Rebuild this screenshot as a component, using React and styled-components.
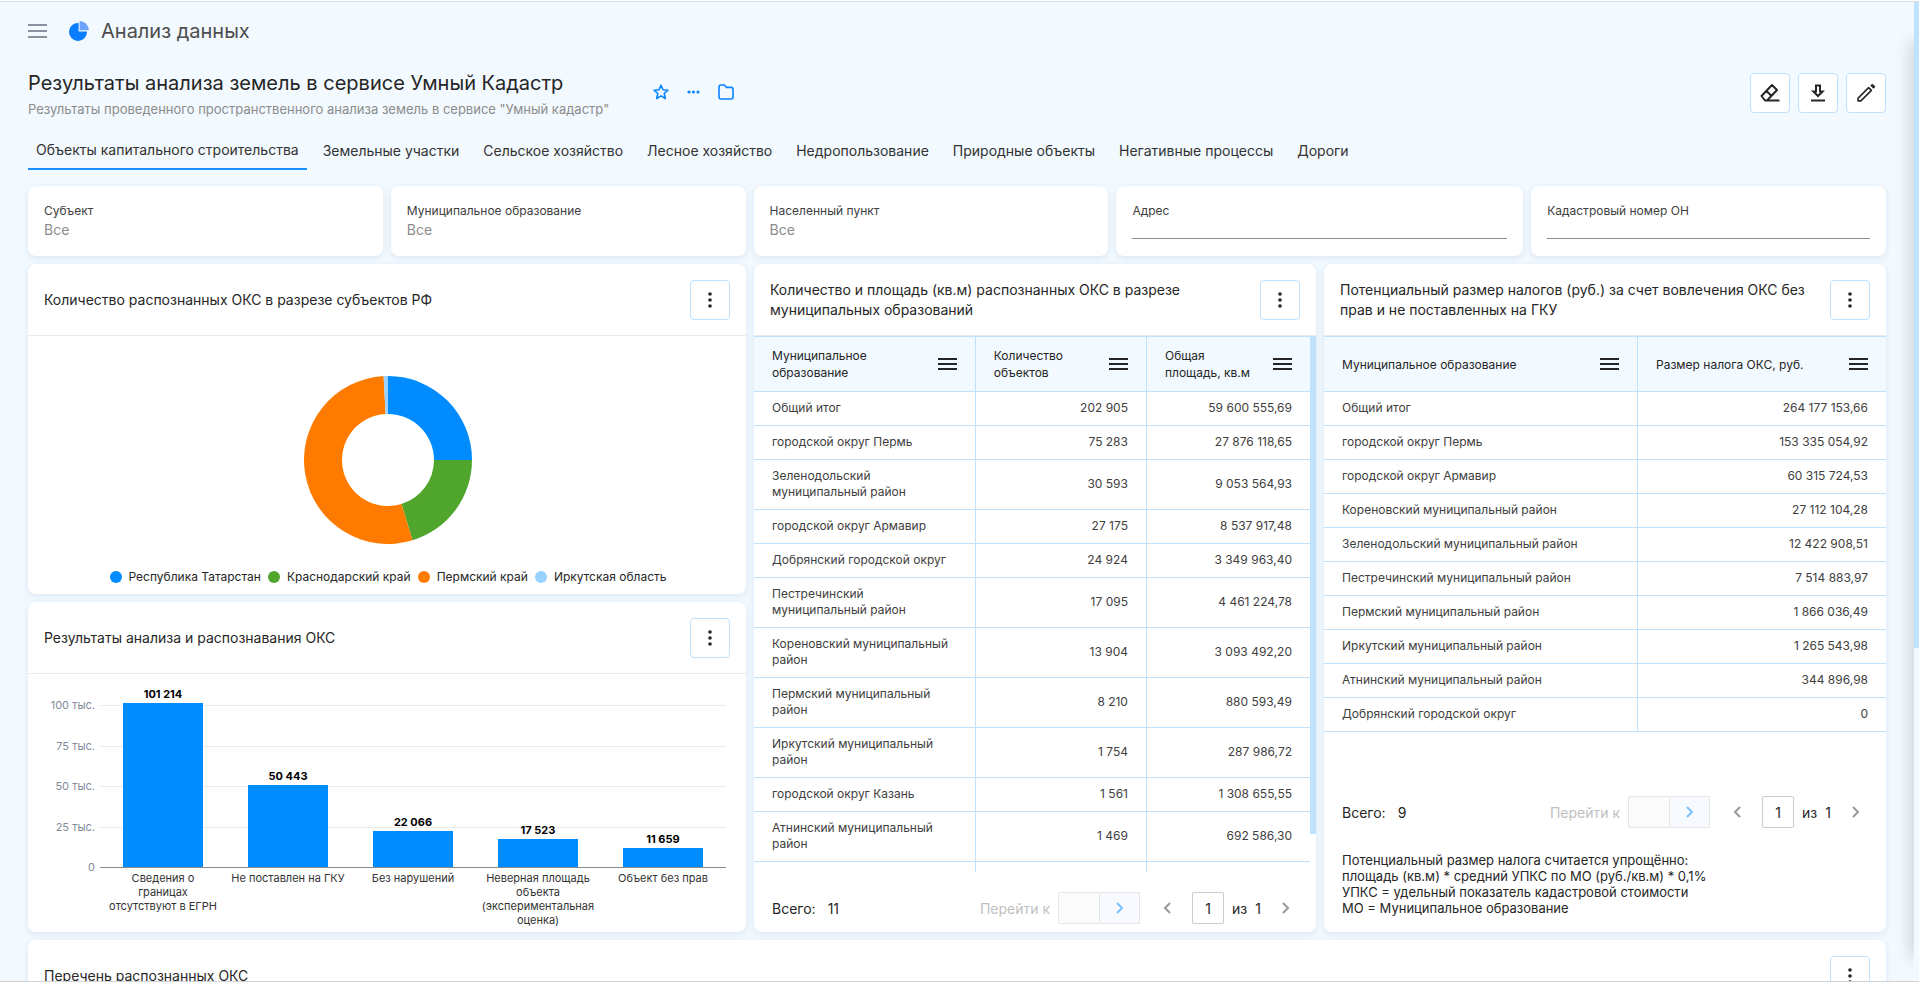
import styled, { createGlobalStyle, css } from "styled-components";

const GlobalStyle = createGlobalStyle`
  * {
    box-sizing: border-box;
  }
  body {
    margin: 0;
    background: #f2f9ff;
    color: #262626;
    font-family: Inter, "Noto Sans", sans-serif;
    font-size: 14px;
  }
  button,
  input {
    font-family: inherit;
    color: inherit;
  }
  svg {
    display: block;
  }
`;

const Screen = styled.div`
  height: 100vh;
  overflow: hidden;
  display: flex;
  border-top: 1px solid #fff;
  border-bottom: 1px solid #cfd3d6;
`;

const Page = styled.div`
  flex: 1;
  min-width: 0;
  padding: 0 28px;
  border-top: 1px solid #d9dde0;
`;

const ScrollTrack = styled.div`
  flex: none;
  width: 5px;
  position: relative;
  z-index: 2;
  background: #f2f9ff;
  border-top: 1px solid #d9dde0;
`;

const ScrollThumb = styled.div`
  height: 66%;
  background: #bfe2ff;
`;

const DrawerEdge = styled.aside`
  position: fixed;
  z-index: 1;
  top: 40px;
  bottom: 24px;
  left: calc(100% - 5px);
  width: 5px;
  box-shadow: 0 0 16px rgba(0, 0, 0, 0.4);
`;

const TopBar = styled.header`
  height: 58px;
  display: flex;
  align-items: center;
  gap: 12px;
`;

const PlainButton = styled.button`
  display: flex;
  align-items: center;
  justify-content: center;
  padding: 0;
  border: 0;
  background: none;
  cursor: pointer;
  color: ${(p) => p.$color || "inherit"};
`;

const Brand = styled.div`
  display: flex;
  align-items: center;
  gap: 12px;
  margin-left: 10px;
  font-size: 20px;
  line-height: 24px;
  color: #4d4d4d;
`;

const TitleRow = styled.div`
  display: flex;
  justify-content: space-between;
  height: 76px;
`;

const TitleBlock = styled.div`
  display: flex;
  gap: 44px;
  padding-top: 9px;
`;

const Title = styled.h1`
  margin: 0;
  font-size: 20px;
  font-weight: 400;
  line-height: 28px;
`;

const Subtitle = styled.p`
  margin: 3px 0 0;
  font-size: 13px;
  line-height: 18px;
  color: #8c8c8c;
`;

const TitleIcons = styled.div`
  display: flex;
  align-items: center;
  gap: 18px;
  height: 46px;
`;

const Actions = styled.div`
  display: flex;
  gap: 8px;
  padding-top: 13px;
`;

const SquareButton = styled.button`
  flex: none;
  width: 40px;
  height: 40px;
  display: flex;
  align-items: center;
  justify-content: center;
  padding: 0;
  background: #fff;
  border: 1px solid #bfe2ff;
  border-radius: 4px;
  cursor: pointer;
`;

const Tabs = styled.nav`
  display: flex;
  gap: 8px;
  height: 34px;
`;

const Tab = styled.a`
  padding: 5px 8px 0;
  font-size: 14px;
  line-height: 20px;
  color: #333;
  text-decoration: none;
  ${(p) =>
    p.$active &&
    css`
      padding-top: 4px;
      border-bottom: 2px solid #1890ff;
    `}
`;

const panel = css`
  background: #fff;
  border-radius: 8px;
  box-shadow: 0 2px 6px rgba(30, 80, 130, 0.1);
`;

const Filters = styled.div`
  display: grid;
  grid-template-columns: 355fr 355fr 355fr 407fr 355fr;
  gap: 8px;
  margin-top: 16px;
`;

const Filter = styled.div`
  ${panel}
  height: 70px;
  padding: 17px 16px 0;
  display: flex;
  flex-direction: column;
  font-size: 12px;
  line-height: 16px;
  color: #404040;
`;

const FilterValue = styled.button`
  padding: 0;
  border: 0;
  background: none;
  text-align: left;
  font-size: 14px;
  line-height: 22px;
  color: #8c8c8c;
`;

const FilterInput = styled.input`
  width: 100%;
  height: 20px;
  border: 0;
  border-bottom: 1px solid #8c8c8c;
  background: none;
  outline: none;
`;

const Board = styled.main`
  display: grid;
  grid-template-columns: 718fr 562fr 562fr;
  gap: 8px;
  margin-top: 8px;
`;

const Column = styled.div`
  display: flex;
  flex-direction: column;
  gap: 8px;
  min-width: 0;
`;

const Card = styled.section`
  ${panel}
  height: ${(p) => (p.$tall ? "668px" : "330px")};
  grid-column: ${(p) => (p.$wide ? "1 / -1" : "auto")};
  display: flex;
  flex-direction: column;
  overflow: hidden;
`;

const CardHead = styled.div`
  flex: none;
  height: 72px;
  display: flex;
  align-items: center;
  justify-content: space-between;
  gap: 16px;
  padding: 0 16px;
  border-bottom: 1px solid #ebebeb;
`;

const CardTitle = styled.h2`
  margin: 0;
  font-size: 14px;
  font-weight: 400;
  line-height: 20px;
`;

const ChartBody = styled.div`
  flex: 1;
  display: flex;
  flex-direction: column;
  align-items: center;
  padding: ${(p) => (p.$donut ? "40px 0 0 2px" : "0")};
`;

const Legend = styled.div`
  display: flex;
  gap: 7px;
  margin-top: 24px;
  font-size: 12px;
  line-height: 18px;
`;

const LegendItem = styled.span`
  display: flex;
  align-items: center;
  gap: 7px;
  &::before {
    content: "";
    width: 12px;
    height: 12px;
    border-radius: 50%;
    background: ${(p) => p.$color};
  }
`;

const TableArea = styled.div`
  flex: 1;
  min-height: 0;
  overflow: hidden;
  display: flex;
  align-items: flex-start;
`;

const TableThumb = styled.div`
  flex: none;
  width: 6px;
  height: 93%;
  background: #bfe2ff;
`;

const Table = styled.table`
  width: 100%;
  table-layout: fixed;
  border-collapse: separate;
  border-spacing: 0;
  font-size: 12px;
  th,
  td {
    border-bottom: 1px solid #bfe2ff;
  }
  th + th,
  td + td {
    border-left: 1px solid #bfe2ff;
  }
`;

const Th = styled.th`
  width: ${(p) => p.$width};
  height: 56px;
  padding: 0 18px;
  border-top: 1px solid #bfe2ff;
  background: #f2f9ff;
  font-weight: 400;
  line-height: 17px;
  text-align: left;
`;

const ThInner = styled.div`
  display: flex;
  align-items: center;
  justify-content: space-between;
  gap: 16px;
`;

const Td = styled.td`
  padding: 8px 18px 9px;
  line-height: 16px;
  text-align: ${(p) => (p.$num ? "right" : "left")};
  color: #404040;
`;

const Pager = styled.div`
  flex: none;
  height: 60px;
  display: flex;
  align-items: center;
  padding: 12px 22px 0 18px;
  font-size: 14px;
`;

const Total = styled.span`
  flex: 1;
  display: flex;
  gap: 12px;
`;

const JumpLabel = styled.label`
  display: flex;
  align-items: center;
  gap: 8px;
  color: #bfbfbf;
`;

const PageInput = styled.input`
  width: ${(p) => (p.$jump ? "42px" : "32px")};
  height: 32px;
  margin-left: ${(p) => (p.$jump ? "0" : "16px")};
  padding: 0;
  text-align: center;
  font-size: 14px;
  background: ${(p) => (p.$jump ? "#fcfcfc" : "#fff")};
  border: 1px solid ${(p) => (p.$jump ? "#e6e6e6" : "#ccc")};
  border-radius: 2px;
`;

const JumpButton = styled(PlainButton)`
  width: 40px;
  height: 32px;
  margin-right: 20px;
  background: #f7fbff;
  border: 1px solid #e6e6e6;
  border-left: 0;
  color: #7cc1ff;
`;

const Pages = styled.span`
  display: flex;
  gap: 8px;
  margin: 0 17px 0 8px;
`;

const Note = styled.p`
  flex: none;
  margin: 0;
  padding: 16px 18px;
  font-size: 13px;
  line-height: 16px;
  white-space: pre-line;
`;

function MenuIcon() {
  return (
    <svg width="19" height="14" viewBox="0 0 19 14">
      <path d="M0 1h19M0 7h19M0 13h19" stroke="#6b6f80" strokeWidth="1.6" />
    </svg>
  );
}

function PieIcon() {
  return (
    <svg width="20" height="20" viewBox="0 0 20 20">
      <path d="M9.6 2A9 9 0 1 0 18 10.4H9.6z" fill="#0a7cff" />
      <path d="M10.6 0a9.2 9.2 0 0 1 9.2 9.2h-9.2z" fill="#6ea2ff" />
    </svg>
  );
}

function StarIcon() {
  return (
    <svg width="16" height="16" viewBox="0 0 16 16" fill="none" stroke="#0a84ff" strokeWidth="1.6" strokeLinejoin="round">
      <path d="M8 1.2l2 4.5 4.9.5-3.7 3.3 1.1 5L8 11.900l-4.3 2.6 1.1-5L1.100 6.200 6 5.700z" />
    </svg>
  );
}

function EllipsisIcon() {
  return (
    <svg width="13" height="4" viewBox="0 0 13 4" fill="#0a84ff">
      <circle cx="2" cy="2" r="1.6" />
      <circle cx="6.5" cy="2" r="1.6" />
      <circle cx="11" cy="2" r="1.6" />
    </svg>
  );
}

function FolderIcon() {
  return (
    <svg width="16" height="16" viewBox="0 0 16 16" fill="none" stroke="#0a84ff" strokeWidth="1.6" strokeLinejoin="round">
      <path d="M1 3q0-2 2-2h3.4l2 2.400H13q2 0 2 2V13q0 2-2 2H3q-2 0-2-2z" />
    </svg>
  );
}

function EraserIcon() {
  return (
    <svg width="20" height="20" viewBox="0 0 20 20" fill="none" stroke="#262626" strokeWidth="2" strokeLinejoin="round">
      <path d="M12 2l5 5L7 17.500H5L1.500 13zM6.500 8l5 5M6 17.500h13.500" />
    </svg>
  );
}

function DownloadIcon() {
  return (
    <svg width="14" height="18" viewBox="0 0 14 18" fill="none" stroke="#262626" strokeWidth="2">
      <path d="M5 1.500h4v6h2.600L7 12 2.400 7.500H5zM0 16.500h14" />
    </svg>
  );
}

function PencilIcon() {
  return (
    <svg width="20" height="20" viewBox="0 0 20 20" fill="none" stroke="#262626" strokeWidth="1.6" strokeLinejoin="round">
      <path d="M12.600 4.600l2.800 2.800L4.900 17.900H2.100v-2.800z" />
      <path d="M14.600 2.600l1.200-1.200q.6-.5 1.200 0l1.600 1.600q.5.600 0 1.200l-1.200 1.200z" fill="#262626" strokeWidth="0.600" />
    </svg>
  );
}

function DotsIcon() {
  return (
    <svg width="4" height="16" viewBox="0 0 4 16" fill="#262626">
      <circle cx="2" cy="2" r="1.8" />
      <circle cx="2" cy="8" r="1.8" />
      <circle cx="2" cy="14" r="1.8" />
    </svg>
  );
}

function ColumnMenuIcon() {
  return (
    <svg width="19" height="12" viewBox="0 0 19 12" stroke="#262626" strokeWidth="2">
      <path d="M0 1h19M0 6h19M0 11h19" />
    </svg>
  );
}

function Chevron({ left }) {
  return (
    <svg width="16" height="16" viewBox="0 0 16 16" fill="none" stroke="currentColor" strokeWidth="2">
      <path d={left ? "M10 3L5 8l5 5" : "M5 3l5 5-5 5"} />
    </svg>
  );
}

function MoreButton() {
  return (
    <SquareButton aria-label="Меню">
      <DotsIcon />
    </SquareButton>
  );
}

const tabs = [
  "Объекты капитального строительства",
  "Земельные участки",
  "Сельское хозяйство",
  "Лесное хозяйство",
  "Недропользование",
  "Природные объекты",
  "Негативные процессы",
  "Дороги",
];

const regions = [
  { name: "Республика Татарстан", color: "#008cff", from: 0, to: 90 },
  { name: "Краснодарский край", color: "#50a62d", from: 90, to: 163 },
  { name: "Пермский край", color: "#ff7b00", from: 163, to: 357 },
  { name: "Иркутская область", color: "#99d1ff", from: 357, to: 360 },
];

const bars = [
  { value: 101214, label: ["Сведения о", "границах", "отсутствуют в ЕГРН"] },
  { value: 50443, label: ["Не поставлен на ГКУ"] },
  { value: 22066, label: ["Без нарушений"] },
  { value: 17523, label: ["Неверная площадь", "объекта", "(экспериментальная", "оценка)"] },
  { value: 11659, label: ["Объект без прав"] },
];

const areaRows = [
  ["Общий итог", "202 905", "59 600 555,69"],
  ["городской округ Пермь", "75 283", "27 876 118,65"],
  ["Зеленодольский муниципальный район", "30 593", "9 053 564,93"],
  ["городской округ Армавир", "27 175", "8 537 917,48"],
  ["Добрянский городской округ", "24 924", "3 349 963,40"],
  ["Пестречинский муниципальный район", "17 095", "4 461 224,78"],
  ["Кореновский муниципальный район", "13 904", "3 093 492,20"],
  ["Пермский муниципальный район", "8 210", "880 593,49"],
  ["Иркутский муниципальный район", "1 754", "287 986,72"],
  ["городской округ Казань", "1 561", "1 308 655,55"],
  ["Атнинский муниципальный район", "1 469", "692 586,30"],
  ["", "", ""],
];

const taxRows = [
  ["Общий итог", "264 177 153,66"],
  ["городской округ Пермь", "153 335 054,92"],
  ["городской округ Армавир", "60 315 724,53"],
  ["Кореновский муниципальный район", "27 112 104,28"],
  ["Зеленодольский муниципальный район", "12 422 908,51"],
  ["Пестречинский муниципальный район", "7 514 883,97"],
  ["Пермский муниципальный район", "1 866 036,49"],
  ["Иркутский муниципальный район", "1 265 543,98"],
  ["Атнинский муниципальный район", "344 896,98"],
  ["Добрянский городской округ", "0"],
];

const note = `Потенциальный размер налога считается упрощённо:
площадь (кв.м) * средний УПКС по МО (руб./кв.м) * 0,1%
УПКС = удельный показатель кадастровой стоимости
МО = Муниципальное образование`;

function arc(from, to) {
  const pt = (r, deg) => {
    const a = (deg * Math.PI) / 180;
    return `${84 + r * Math.sin(a)} ${84 - r * Math.cos(a)}`;
  };
  const big = to - from > 180 ? 1 : 0;
  return `M${pt(84, from)}A84 84 0 ${big} 1 ${pt(84, to)}L${pt(46, to)}A46 46 0 ${big} 0 ${pt(46, from)}Z`;
}

function Donut() {
  return (
    <svg width="168" height="168" viewBox="0 0 168 168">
      {regions.map((r) => (
        <path key={r.name} d={arc(r.from, r.to)} fill={r.color} />
      ))}
    </svg>
  );
}

function BarChart() {
  const base = 193;
  const y = (v) => Math.round(base - (v * 162) / 100000);
  return (
    <svg width="100%" viewBox="0 0 718 256" fontSize="11">
      {[25, 50, 75, 100].map((n) => (
        <g key={n}>
          <path d={`M72 ${y(n * 1000) + 0.5}H698`} stroke="#ebebeb" />
          <text x="67" y={y(n * 1000) + 4} textAnchor="end" fill="#7f8b99">
            {n} тыс.
          </text>
        </g>
      ))}
      <text x="67" y={base + 4} textAnchor="end" fill="#7f8b99">
        0
      </text>
      {bars.map((b, i) => {
        const cx = 135 + i * 125;
        const top = y(b.value);
        return (
          <g key={b.value} textAnchor="middle">
            <rect x={cx - 40} y={top} width="80" height={base - top} fill="#008cff" />
            <text x={cx} y={top - 5} fontWeight="700" fill="#000" stroke="#fff" strokeWidth="2" paintOrder="stroke">
              {b.value.toLocaleString("ru-RU")}
            </text>
            <text fill="#333">
              {b.label.map((line, n) => (
                <tspan key={line} x={cx} y={base + 15 + n * 14}>
                  {line}
                </tspan>
              ))}
            </text>
          </g>
        );
      })}
      <path d="M72 193.5H698" stroke="#8c8c8c" />
    </svg>
  );
}

function DataTable({ columns, rows }) {
  return (
    <Table>
      <thead>
        <tr>
          {columns.map((c) => (
            <Th key={c.title} $width={c.width}>
              <ThInner>
                {c.title}
                <PlainButton aria-label="Меню столбца">
                  <ColumnMenuIcon />
                </PlainButton>
              </ThInner>
            </Th>
          ))}
        </tr>
      </thead>
      <tbody>
        {rows.map((row) => (
          <tr key={row[0]}>
            {row.map((cell, i) => (
              <Td key={i} $num={i > 0}>
                {cell || "\u00a0"}
              </Td>
            ))}
          </tr>
        ))}
      </tbody>
    </Table>
  );
}

function Pagination({ total }) {
  return (
    <Pager>
      <Total>
        <span>Всего:</span>
        <span>{total}</span>
      </Total>
      <JumpLabel>
        Перейти к
        <PageInput $jump disabled />
      </JumpLabel>
      <JumpButton aria-label="Перейти">
        <Chevron />
      </JumpButton>
      <PlainButton $color="#999" aria-label="Назад">
        <Chevron left />
      </PlainButton>
      <PageInput aria-label="Страница" defaultValue="1" />
      <Pages>
        <span>из</span>
        <span>1</span>
      </Pages>
      <PlainButton $color="#999" aria-label="Вперёд">
        <Chevron />
      </PlainButton>
    </Pager>
  );
}

export default function App() {
  return (
    <Screen>
      <GlobalStyle />
      <Page>
        <TopBar>
          <PlainButton aria-label="Меню">
            <MenuIcon />
          </PlainButton>
          <Brand>
            <PieIcon />
            Анализ данных
          </Brand>
        </TopBar>

        <TitleRow>
          <TitleBlock>
            <div>
              <Title>Результаты анализа земель в сервисе Умный Кадастр</Title>
              <Subtitle>Результаты проведенного пространственного анализа земель в сервисе "Умный кадастр"</Subtitle>
            </div>
            <TitleIcons>
              <PlainButton aria-label="В избранное">
                <StarIcon />
              </PlainButton>
              <PlainButton aria-label="Ещё">
                <EllipsisIcon />
              </PlainButton>
              <PlainButton aria-label="Папка">
                <FolderIcon />
              </PlainButton>
            </TitleIcons>
          </TitleBlock>
          <Actions>
            <SquareButton aria-label="Очистить">
              <EraserIcon />
            </SquareButton>
            <SquareButton aria-label="Скачать">
              <DownloadIcon />
            </SquareButton>
            <SquareButton aria-label="Редактировать">
              <PencilIcon />
            </SquareButton>
          </Actions>
        </TitleRow>

        <Tabs>
          {tabs.map((t, i) => (
            <Tab key={t} href="#" $active={i === 0}>
              {t}
            </Tab>
          ))}
        </Tabs>

        <Filters>
          {["Субъект", "Муниципальное образование", "Населенный пункт"].map((f) => (
            <Filter key={f}>
              <span>{f}</span>
              <FilterValue aria-label={f}>Все</FilterValue>
            </Filter>
          ))}
          {["Адрес", "Кадастровый номер ОН"].map((f) => (
            <Filter as="label" key={f}>
              {f}
              <FilterInput />
            </Filter>
          ))}
        </Filters>

        <Board>
          <Column>
            <Card>
              <CardHead>
                <CardTitle>Количество распознанных ОКС в разрезе субъектов РФ</CardTitle>
                <MoreButton />
              </CardHead>
              <ChartBody $donut>
                <Donut />
                <Legend>
                  {regions.map((r) => (
                    <LegendItem key={r.name} $color={r.color}>
                      {r.name}
                    </LegendItem>
                  ))}
                </Legend>
              </ChartBody>
            </Card>
            <Card>
              <CardHead>
                <CardTitle>Результаты анализа и распознавания ОКС</CardTitle>
                <MoreButton />
              </CardHead>
              <ChartBody>
                <BarChart />
              </ChartBody>
            </Card>
          </Column>

          <Card $tall>
            <CardHead>
              <CardTitle>Количество и площадь (кв.м) распознанных ОКС в разрезе муниципальных образований</CardTitle>
              <MoreButton />
            </CardHead>
            <TableArea>
              <DataTable
                columns={[
                  { title: "Муниципальное образование", width: "39.7%" },
                  { title: "Количество объектов", width: "30.8%" },
                  { title: "Общая площадь, кв.м", width: "29.5%" },
                ]}
                rows={areaRows}
              />
              <TableThumb />
            </TableArea>
            <Pagination total={11} />
          </Card>

          <Card $tall>
            <CardHead>
              <CardTitle>Потенциальный размер налогов (руб.) за счет вовлечения ОКС без прав и не поставленных на ГКУ</CardTitle>
              <MoreButton />
            </CardHead>
            <TableArea>
              <DataTable
                columns={[
                  { title: "Муниципальное образование", width: "55.7%" },
                  { title: "Размер налога ОКС, руб.", width: "44.3%" },
                ]}
                rows={taxRows}
              />
            </TableArea>
            <Pagination total={9} />
            <Note>{note}</Note>
          </Card>

          <Card $wide>
            <CardHead>
              <CardTitle>Перечень распознанных ОКС</CardTitle>
              <MoreButton />
            </CardHead>
          </Card>
        </Board>
      </Page>
      <ScrollTrack>
        <ScrollThumb />
      </ScrollTrack>
      <DrawerEdge />
    </Screen>
  );
}
